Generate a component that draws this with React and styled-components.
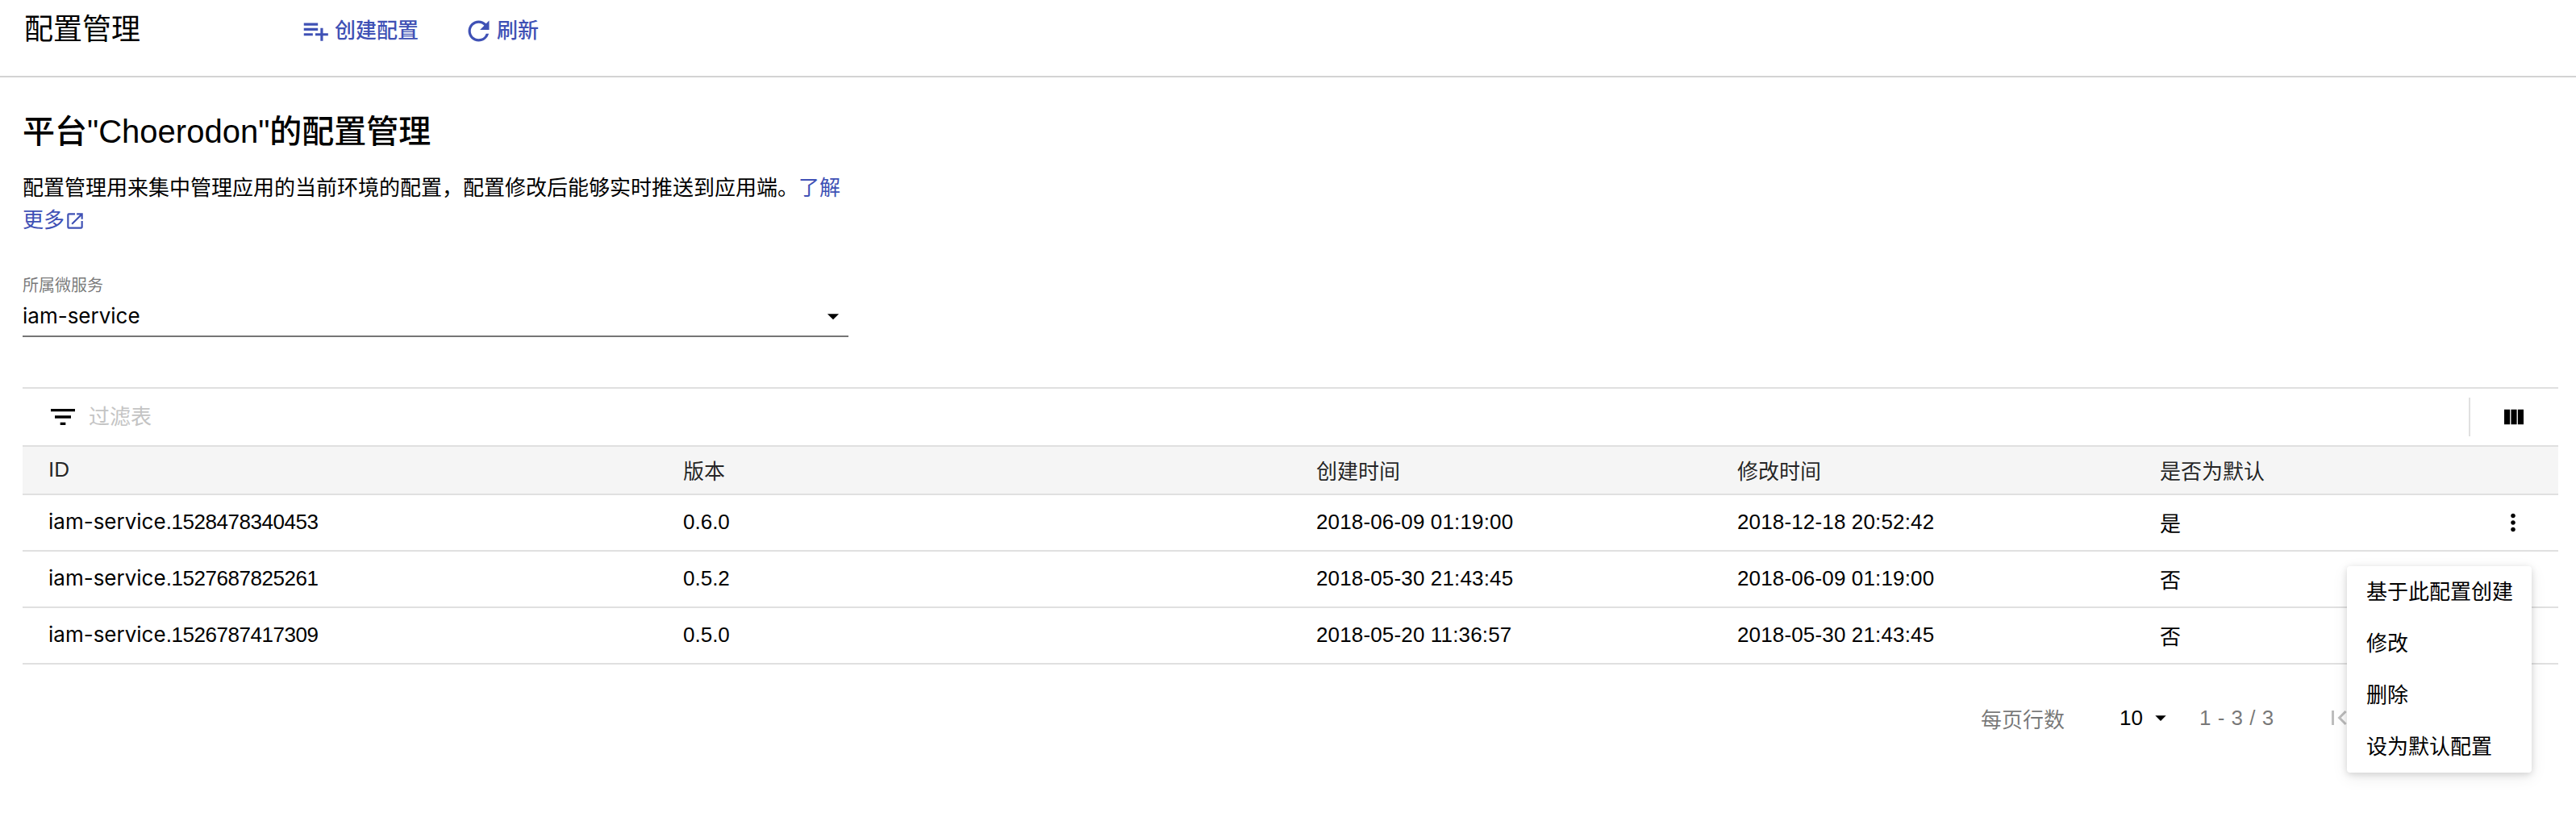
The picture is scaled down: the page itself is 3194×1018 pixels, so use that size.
import React from "react";
import styled, { createGlobalStyle } from "styled-components";
import {
  MdPlaylistAdd,
  MdRefresh,
  MdOpenInNew,
  MdFilterList,
  MdViewColumn,
  MdMoreVert,
  MdArrowDropDown,
  MdFirstPage,
  MdChevronLeft,
  MdChevronRight,
  MdLastPage,
} from "react-icons/md";

const GlobalStyle = createGlobalStyle`
  html, body {
    margin: 0;
    padding: 0;
    background: #fff;
    font-family: "Liberation Sans", "Noto Sans CJK SC", sans-serif;
    color: rgba(0, 0, 0, 0.87);
  }
`;

const Page = styled.div`
  position: relative;
  width: 3194px;
  height: 1018px;
  overflow: hidden;
`;

const Header = styled.header`
  display: flex;
  align-items: flex-start;
  height: 94px;
  padding: 0 0 0 30px;
  border-bottom: 2px solid #d3d3d3;
`;

const HeaderTitle = styled.h1`
  margin: 14px 0 0;
  width: 342px;
  font-size: 36px;
  line-height: 46px;
  font-weight: 400;
  color: #000;
`;

const HeaderAction = styled.button`
  display: flex;
  align-items: center;
  gap: ${({ $gap }) => $gap}px;
  margin: 20px ${({ $after }) => $after || 0}px 0 0;
  padding: 0;
  height: 36px;
  border: 0;
  background: none;
  font: 500 26px/36px "Liberation Sans", "Noto Sans CJK SC", sans-serif;
  color: #3f51b5;
`;

const Content = styled.main`
  padding: 0 22px 0 28px;
`;

const Title = styled.h2`
  margin: 43px 0 0;
  font-size: 40px;
  line-height: 48px;
  font-weight: 500;
  color: #000;
`;

const Description = styled.p`
  margin: 26px 0 0;
  width: 1024px;
  font-size: 26px;
  line-height: 40px;
  color: #000;
`;

const DocLink = styled.a`
  color: #3f51b5;

  svg {
    vertical-align: -5px;
  }
`;

const Field = styled.div`
  width: 1024px;
  margin-top: 49px;
  border-bottom: 2px solid #757575;
`;

const FieldLabel = styled.div`
  font-size: 20px;
  line-height: 24px;
  color: rgba(0, 0, 0, 0.54);
`;

const FieldValue = styled.div`
  display: flex;
  align-items: center;
  justify-content: space-between;
  margin-top: 2px;
  height: 46px;
  padding-bottom: 2px;
  font-size: 26px;
  color: #000;

  svg {
    margin: 2px 2px 0 0;
  }
`;

// the service name is set wider than the digits after it
const ServiceName = styled.span`
  font-family: Inter, sans-serif;
`;

const Toolbar = styled.div`
  display: flex;
  align-items: center;
  height: 70px;
  margin-top: 62px;
  padding-left: 30px;
  border-top: 2px solid #e0e0e0;
  border-bottom: 2px solid #e0e0e0;
`;

const Placeholder = styled.span`
  flex: 1;
  margin-left: 12px;
  padding-bottom: 6px;
  font-size: 26px;
  color: #c4c4c4;
`;

const ToolbarColumns = styled.div`
  display: flex;
  align-items: center;
  width: 111px;
  height: 48px;
  padding-left: 38px;
  box-sizing: border-box;
  border-left: 2px solid #e0e0e0;
  color: #000;
`;

const Row = styled.div`
  display: grid;
  grid-template-columns: 787px 785px 522px 524px 1fr 73px;
  align-items: center;
  height: ${({ $head }) => ($head ? 58 : 68)}px;
  background: ${({ $head }) => ($head ? "#f5f5f5" : "#fff")};
  border-bottom: 2px solid #e0e0e0;
  font-size: 26px;
  color: ${({ $head }) => ($head ? "rgba(0, 0, 0, 0.87)" : "#000")};
`;

const Cell = styled.div`
  padding: 0 0 2px 32px;
  letter-spacing: ${({ $spread }) => ($spread ? "0.15px" : "normal")};
`;

const IdDigits = styled.span`
  letter-spacing: -0.45px;
`;

const RowAction = styled.div`
  display: flex;
  align-items: center;
  color: #000;
`;

const Pagination = styled.div`
  display: flex;
  align-items: center;
  height: 64px;
  margin-top: 34px;
  padding-left: 2428px;
  font-size: 26px;
  color: rgba(0, 0, 0, 0.54);
`;

const PagerSelect = styled.div`
  display: flex;
  align-items: center;
  width: 99px;
  margin-left: 68px;
  color: #000;

  svg {
    margin-left: 6px;
  }
`;

const PagerRange = styled.span`
  width: 141px;
  letter-spacing: 0.5px;
`;

const PagerButton = styled.span`
  display: flex;
  align-items: center;
  justify-content: center;
  width: 64px;
  height: 64px;
  color: rgba(0, 0, 0, 0.26);
`;

const Menu = styled.ul`
  position: absolute;
  top: 702px;
  left: 2910px;
  width: 229px;
  height: 256px;
  margin: 0;
  padding: 0;
  list-style: none;
  background: #fff;
  border-radius: 4px;
  box-shadow: 0 2px 8px rgba(0, 0, 0, 0.14), 0 6px 20px rgba(0, 0, 0, 0.08);
`;

const MenuItem = styled.li`
  height: 64px;
  padding-left: 24px;
  font-size: 26px;
  line-height: 64px;
  color: #000;
`;

const rows = [
  ["1528478340453", "0.6.0", "2018-06-09 01:19:00", "2018-12-18 20:52:42", "是"],
  ["1527687825261", "0.5.2", "2018-05-30 21:43:45", "2018-06-09 01:19:00", "否"],
  ["1526787417309", "0.5.0", "2018-05-20 11:36:57", "2018-05-30 21:43:45", "否"],
];

const menuItems = ["基于此配置创建", "修改", "删除", "设为默认配置"];

export default function App() {
  return (
    <Page>
      <GlobalStyle />
      <Header>
        <HeaderTitle>配置管理</HeaderTitle>
        <HeaderAction $gap={5} $after={55}>
          <MdPlaylistAdd size={38} />
          创建配置
        </HeaderAction>
        <HeaderAction $gap={3}>
          <MdRefresh size={39} />
          刷新
        </HeaderAction>
      </Header>
      <Content>
        <Title>平台"Choerodon"的配置管理</Title>
        <Description>
          配置管理用来集中管理应用的当前环境的配置，配置修改后能够实时推送到应用端。
          <DocLink>了解</DocLink>
          <DocLink>
            更多
            <MdOpenInNew size={26} />
          </DocLink>
        </Description>
        <Field>
          <FieldLabel>所属微服务</FieldLabel>
          <FieldValue>
            <ServiceName>iam-service</ServiceName>
            <MdArrowDropDown size={34} />
          </FieldValue>
        </Field>
        <Toolbar>
          <MdFilterList size={40} color="#000" />
          <Placeholder>过滤表</Placeholder>
          <ToolbarColumns>
            <MdViewColumn size={32} />
          </ToolbarColumns>
        </Toolbar>
        <Row $head>
          <Cell>ID</Cell>
          <Cell>版本</Cell>
          <Cell>创建时间</Cell>
          <Cell>修改时间</Cell>
          <Cell>是否为默认</Cell>
          <span />
        </Row>
        {rows.map(([id, version, created, updated, isDefault], i) => (
          <Row key={id}>
            <Cell>
              <ServiceName>iam-service</ServiceName>
              <IdDigits>.{id}</IdDigits>
            </Cell>
            <Cell>{version}</Cell>
            <Cell $spread>{created}</Cell>
            <Cell $spread>{updated}</Cell>
            <Cell>{isDefault}</Cell>
            <RowAction>{i === 0 && <MdMoreVert size={34} />}</RowAction>
          </Row>
        ))}
        <Pagination>
          每页行数
          <PagerSelect>
            10
            <MdArrowDropDown size={32} />
          </PagerSelect>
          <PagerRange>1 - 3 / 3</PagerRange>
          <PagerButton>
            <MdFirstPage size={36} />
          </PagerButton>
          <PagerButton>
            <MdChevronLeft size={36} />
          </PagerButton>
          <PagerButton>
            <MdChevronRight size={36} />
          </PagerButton>
          <PagerButton>
            <MdLastPage size={36} />
          </PagerButton>
        </Pagination>
      </Content>
      <Menu>
        {menuItems.map((label) => (
          <MenuItem key={label}>{label}</MenuItem>
        ))}
      </Menu>
    </Page>
  );
}
